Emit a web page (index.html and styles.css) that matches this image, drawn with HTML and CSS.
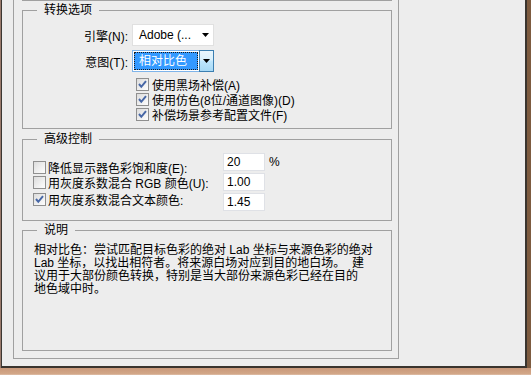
FILE: index.html
```html
<!DOCTYPE html>
<html lang="zh-CN">
<head>
    <meta charset="UTF-8">
    <meta name="viewport" content="width=device-width, initial-scale=1.0">
    <title>颜色设置 - 转换选项</title>
    <link rel="stylesheet" href="styles.css">
</head>
<body>

    <div class="window">
        <div class="panel">
            <!-- bottom edge of the group above -->
            <div class="prev-group"></div>

            <!-- 转换选项 -->
            <fieldset class="group">
                <legend>转换选项</legend>
                <div class="group-body convert">
                    <div class="field">
                        <span class="field-label">引擎(N):</span>
                        <div class="select">
                            <span class="select-text">Adobe (...</span>
                            <span class="select-arrow">
                                <svg width="7" height="4" viewBox="0 0 7 4"><polygon points="0,0 7,0 3.5,4" fill="#000"/></svg>
                            </span>
                        </div>
                    </div>
                    <div class="field">
                        <span class="field-label">意图(T):</span>
                        <div class="select focused">
                            <span class="select-text">相对比色</span>
                            <span class="select-arrow">
                                <svg width="7" height="4" viewBox="0 0 7 4"><polygon points="0,0 7,0 3.5,4" fill="#000"/></svg>
                            </span>
                        </div>
                    </div>
                    <div class="convert-checks">
                        <div class="check-row">
                            <span class="cb checked"><svg width="11" height="11" viewBox="0 0 11 11"><polyline points="2,5 4.3,7.8 9,2.2" fill="none" stroke="#4767a6" stroke-width="2"/></svg></span>
                            <span>使用黑场补偿(A)</span>
                        </div>
                        <div class="check-row">
                            <span class="cb checked"><svg width="11" height="11" viewBox="0 0 11 11"><polyline points="2,5 4.3,7.8 9,2.2" fill="none" stroke="#4767a6" stroke-width="2"/></svg></span>
                            <span>使用仿色(8位/通道图像)(D)</span>
                        </div>
                        <div class="check-row">
                            <span class="cb checked"><svg width="11" height="11" viewBox="0 0 11 11"><polyline points="2,5 4.3,7.8 9,2.2" fill="none" stroke="#4767a6" stroke-width="2"/></svg></span>
                            <span>补偿场景参考配置文件(F)</span>
                        </div>
                    </div>
                </div>
            </fieldset>

            <!-- 高级控制 -->
            <fieldset class="group group-advanced">
                <legend>高级控制</legend>
                <div class="group-body advanced">
                    <div class="adv-checks">
                        <div class="check-row tight">
                            <span class="cb"></span>
                            <span>降低显示器色彩饱和度(E):</span>
                        </div>
                        <div class="check-row tight">
                            <span class="cb"></span>
                            <span>用灰度系数混合 RGB 颜色(U):</span>
                        </div>
                        <div class="check-row tight last">
                            <span class="cb checked"><svg width="11" height="11" viewBox="0 0 11 11"><polyline points="2,5 4.3,7.8 9,2.2" fill="none" stroke="#4767a6" stroke-width="2"/></svg></span>
                            <span>用灰度系数混合文本颜色:</span>
                        </div>
                    </div>
                    <div class="adv-values">
                        <div class="value-row"><input class="num" type="text" value="20"><span class="unit">%</span></div>
                        <div class="value-row"><input class="num" type="text" value="1.00"></div>
                        <div class="value-row"><input class="num" type="text" value="1.45"></div>
                    </div>
                </div>
            </fieldset>

            <!-- 说明 -->
            <fieldset class="group group-desc">
                <legend>说明</legend>
                <div class="group-body desc">
                    相对比色：尝试匹配目标色彩的绝对 Lab 坐标与来源色彩的绝对<br>
                    Lab 坐标，以找出相符者。将来源白场对应到目的地白场。&nbsp;&nbsp;建<br>
                    议用于大部份颜色转换，特别是当大部份来源色彩已经在目的<br>
                    地色域中时。
                </div>
            </fieldset>
        </div>
    </div>
    <div class="desk-bottom"></div>

</body>
</html>
```

FILE: styles.css
```css
body { margin: 0; padding-left: 1px; width: 530px; height: 375px; overflow: hidden; background: linear-gradient(to right, #9a7a6c 1px, #7d5b40 1px); font-family: "Liberation Sans", "Noto Sans CJK SC", sans-serif; font-size: 12px; color: #000; }

/* Dialog window */
.window { width: 523px; height: 366px; background: #ededed; border-left: 1px solid #3c3733; border-right: 2px solid #3a342e; border-bottom: 2px solid #3a342e; overflow: hidden; }
.desk-bottom { height: 8px; margin-left: -1px; background: linear-gradient(to bottom, #c9987a, #d2a687 70%, #e8d2c4); }

.panel { width: 370px; margin-left: 11px; padding: 0 6px 7px 8px; border: 1px solid #a0a0a0; border-top: none; }
.prev-group { height: 0; border-bottom: 1px solid #a0a0a0; }

/* Group boxes */
.group { margin: 2px 0 0; padding: 0; min-width: 0; border: 1px solid #a0a0a0; }
.group-advanced { margin-top: 3px; }
.group legend { margin-left: 14px; padding: 0 7px; line-height: 14px; font-size: 12px; }
.group-body { box-sizing: border-box; }

/* 转换选项 */
.convert { padding: 7px 0 6px; }
.field { display: flex; align-items: center; gap: 4px; height: 22px; margin-bottom: 4px; }
.field-label { width: 105px; text-align: right; }
.select { box-sizing: border-box; display: flex; width: 82px; height: 22px; background: #fff; border: 1px solid #e0e0e0; }
.select-text { flex: 1; padding-left: 6px; line-height: 20px; white-space: nowrap; }
.select-arrow { width: 15px; display: flex; align-items: center; justify-content: center; }
.select.focused { border-color: #7eb4ea; }
.select.focused .select-text { margin: 1px 1px 1px 1px; padding-left: 4px; line-height: 16px; color: #fff; background: #3399ff; border: 1px dotted #1b1b1b; }
.select.focused .select-arrow { box-sizing: border-box; width: 15px; margin: -1px -1px -1px 0; border: 1px solid #3c7fb1; background: linear-gradient(to bottom, #eaf6fd, #d9f0fc 45%, #bee6fd 50%, #a7d9f5); }

.convert-checks { margin: 5px 0 0 113px; }
.check-row { display: flex; align-items: center; gap: 3px; height: 15px; white-space: nowrap; }
.check-row.tight { gap: 2px; }
.check-row.last { margin-top: 2px; }

/* Checkbox */
.cb { box-sizing: border-box; width: 13px; height: 13px; flex: none; border: 1px solid #8f8f8f; background: linear-gradient(135deg, #dcdcdc, #f4f4f4 70%, #fdfdfd); display: flex; }

/* 高级控制 */
.advanced { display: flex; align-items: flex-start; padding: 7px 0 9px; }
.adv-checks { width: 190px; margin-left: 10px; padding-top: 7px; }
.adv-values { display: flex; flex-direction: column; gap: 2px; }
.value-row { display: flex; align-items: center; gap: 4px; height: 18px; }
.num { box-sizing: border-box; width: 42px; height: 18px; margin: 0; padding: 0 3px; border: 1px solid #dfe1e6; background: #fff; font: inherit; color: #000; }
.unit { font-size: 12px; }

/* 说明 */
.desc { height: 113px; padding: 7px 11px 0; line-height: 13px; white-space: nowrap; }
```
